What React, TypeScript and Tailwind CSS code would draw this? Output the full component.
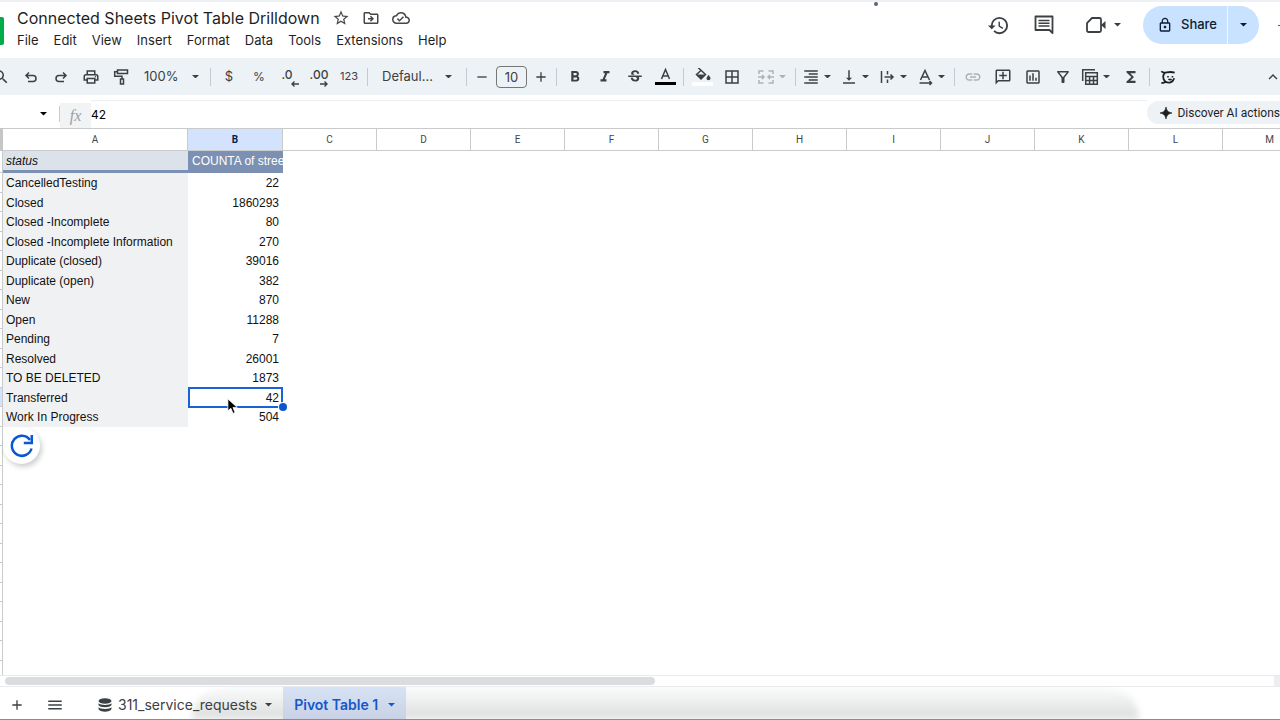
import React from 'react';
import {
    MdAdd,
    MdBorderAll,
    MdFormatAlignRight,
    MdFormatBold,
    MdFormatItalic,
    MdFunctions,
    MdHistory,
    MdInsertLink,
    MdKeyboardArrowUp,
    MdLockOutline,
    MdMenu,
    MdOutlineAddComment,
    MdOutlineCloudDone,
    MdOutlineDriveFileMove,
    MdOutlineFilterAlt,
    MdOutlineInsertChartOutlined,
    MdOutlinePrint,
    MdOutlineStarBorder,
    MdRemove,
    MdSearch,
    MdStrikethroughS,
    MdVerticalAlignBottom,
} from 'react-icons/md';

const menus = ['File', 'Edit', 'View', 'Insert', 'Format', 'Data', 'Tools', 'Extensions', 'Help'];

const columns = ['A', 'B', 'C', 'D', 'E', 'F', 'G', 'H', 'I', 'J', 'K', 'L', 'M'];

const rows = [
    { status: 'CancelledTesting', count: 22 },
    { status: 'Closed', count: 1860293 },
    { status: 'Closed -Incomplete', count: 80 },
    { status: 'Closed -Incomplete Information', count: 270 },
    { status: 'Duplicate (closed)', count: 39016 },
    { status: 'Duplicate (open)', count: 382 },
    { status: 'New', count: 870 },
    { status: 'Open', count: 11288 },
    { status: 'Pending', count: 7 },
    { status: 'Resolved', count: 26001 },
    { status: 'TO BE DELETED', count: 1873 },
    { status: 'Transferred', count: 42 },
    { status: 'Work In Progress', count: 504 },
];

const selectedStatus = 'Transferred';

const emptyRows = Array.from({ length: 13 }, (_, i) => i);

type SvgProps = { children: React.ReactNode; className?: string };

const Svg = ({ children, className = 'size-[18px]' }: SvgProps) => (
    <svg
        viewBox="0 0 18 18"
        className={className}
        fill="none"
        stroke="currentColor"
        strokeWidth="1.5"
        aria-hidden="true"
    >
        {children}
    </svg>
);

const Caret = ({ className = 'w-2' }: { className?: string }) => (
    <svg viewBox="0 0 8 4" className={className} fill="currentColor" aria-hidden="true">
        <path d="M0 0h8L4 4z" />
    </svg>
);

const Separator = () => <div className="mx-[3px] h-[18px] w-px shrink-0 bg-[#c7cbd1]" />;

type ToolProps = { label: string; children: React.ReactNode; disabled?: boolean };

const Tool = ({ label, children, disabled }: ToolProps) => (
    <button
        type="button"
        aria-label={label}
        disabled={disabled}
        className="flex h-7 w-[30px] shrink-0 items-center justify-center rounded text-[#3c4043] disabled:text-[#aeb2b7]"
    >
        {children}
    </button>
);

const SplitTool = ({ label, children, disabled }: ToolProps) => (
    <button
        type="button"
        aria-label={label}
        disabled={disabled}
        className="flex h-7 w-[38px] shrink-0 items-center rounded text-[#3c4043] disabled:text-[#aeb2b7]"
    >
        <span className="flex w-6 justify-center">{children}</span>
        <Caret className="ml-px w-[7px]" />
    </button>
);

const Header = () => (
    <header className="relative flex h-[58px] shrink-0 border-t-2 border-[#edf1f6]">
        <div className="mt-[15px] h-7 w-1 rounded-r-xs bg-[#00ac47]" />
        <div className="ml-[13px] flex flex-col pt-1">
            <div className="flex h-6 items-center text-[#1f1f1f]">
                <h1 className="text-base whitespace-nowrap">Connected Sheets Pivot Table Drilldown</h1>
                <div className="ml-3 flex gap-3 text-[#444746]">
                    <button type="button" aria-label="Star">
                        <MdOutlineStarBorder className="size-[18px]" />
                    </button>
                    <button type="button" aria-label="Move">
                        <MdOutlineDriveFileMove className="size-[18px]" />
                    </button>
                    <button type="button" aria-label="Saved to Drive">
                        <MdOutlineCloudDone className="size-[18px]" />
                    </button>
                </div>
            </div>
            <nav className="flex gap-[15px] text-[13px] leading-5 text-[#1f1f1f]">
                {menus.map((menu) => (
                    <button key={menu} type="button">
                        {menu}
                    </button>
                ))}
            </nav>
        </div>
        <span className="absolute top-0 left-[68%] ml-1 size-1 rounded-full bg-[#5f6368]" />
        <div className="ml-auto flex h-[46px] items-center text-[#3c4043]">
            <button type="button" aria-label="Version history" className="mr-6">
                <MdHistory className="size-[23px]" />
            </button>
            <button type="button" aria-label="Comments" className="mr-8">
                <svg viewBox="0 0 20 20" className="size-5" fill="none" stroke="currentColor" strokeWidth="1.8">
                    <path d="M1.5 1.5h17v16.5l-3-3h-14z" strokeLinejoin="round" />
                    <path d="M4.5 5.5h11M4.5 8.3h11M4.5 11h11" strokeWidth="1.6" />
                </svg>
            </button>
            <button type="button" aria-label="Join a call" className="mr-[22px] flex items-center gap-2">
                <svg viewBox="0 0 20 16" className="h-4 w-5" fill="none" stroke="currentColor" strokeWidth="1.8">
                    <path d="M6 1h7.5A1.5 1.5 0 0 1 15 2.500v11a1.5 1.5 0 0 1-1.5 1.5h-11A1.5 1.5 0 0 1 1 13.500V6z" />
                    <path d="M15 8l4.500-4v8z" fill="currentColor" stroke="none" />
                </svg>
                <Caret className="w-[7px]" />
            </button>
            <div className="flex h-[38px] overflow-hidden rounded-full bg-[#c8e2ff] text-[#0b1d33]">
                <button type="button" className="flex w-[84px] items-center justify-center gap-2 pl-1 text-[13px] font-medium">
                    <MdLockOutline className="size-4" />
                    Share
                </button>
                <button
                    type="button"
                    aria-label="Sharing options"
                    className="flex w-8 items-center justify-center border-l border-white/70"
                >
                    <Caret className="w-[7px]" />
                </button>
            </div>
            <span className="ml-[19px] h-px w-0.5 bg-[#5f6368]" />
        </div>
    </header>
);

const Toolbar = () => (
    <div className="flex h-[37px] shrink-0 items-center overflow-hidden bg-[#edf2f7] text-[13px] text-[#3c4043]">
        <div className="-ml-3.5 flex">
            <Tool label="Search the menus">
                <MdSearch className="size-[18px]" />
            </Tool>
            <Tool label="Undo">
                <Svg>
                    <path d="M7 4.500 4 7.500l3 3M4.500 7.500H11a3 3 0 0 1 0 6H6" />
                </Svg>
            </Tool>
            <Tool label="Redo">
                <Svg>
                    <path d="m11 4.500 3 3-3 3M13.500 7.500H7a3 3 0 0 0 0 6h5" />
                </Svg>
            </Tool>
            <Tool label="Print">
                <MdOutlinePrint className="size-[18px]" />
            </Tool>
            <Tool label="Paint format">
                <Svg>
                    <path d="M5.500 2h10v3.500h-10zM5.500 3.700H2.700v4.500H10V11M8.500 11h3v5h-3z" />
                </Svg>
            </Tool>
        </div>
        <button type="button" className="ml-2 flex w-[63px] items-center justify-between pr-2">
            100%
            <Caret className="w-[7px]" />
        </button>
        <Separator />
        <Tool label="Format as currency">$</Tool>
        <Tool label="Format as percent">
            <span className="text-xs">%</span>
        </Tool>
        <Tool label="Decrease decimal places">
            <span className="relative flex h-5 items-start pr-1 text-xs leading-4 font-medium">
                .0
                <svg
                    viewBox="0 0 8 6"
                    className="absolute -right-0.5 bottom-0 w-2"
                    fill="none"
                    stroke="currentColor"
                    strokeWidth="1.4"
                >
                    <path d="M8 3H1M3.500.5 1 3l2.500 2.500" />
                </svg>
            </span>
        </Tool>
        <Tool label="Increase decimal places">
            <span className="relative flex h-5 items-start text-xs leading-4 font-medium">
                .00
                <svg
                    viewBox="0 0 8 6"
                    className="absolute right-0 bottom-0 w-2"
                    fill="none"
                    stroke="currentColor"
                    strokeWidth="1.4"
                >
                    <path d="M0 3h7M4.500.5 7 3 4.500 5.500" />
                </svg>
            </span>
        </Tool>
        <Tool label="More formats">
            <span className="text-[11px]">123</span>
        </Tool>
        <Separator />
        <button type="button" className="flex w-[92px] items-center justify-between px-[11px]">
            Defaul...
            <Caret className="w-[7px]" />
        </button>
        <Separator />
        <button type="button" aria-label="Decrease font size" className="flex w-6 justify-center">
            <MdRemove className="size-4" />
        </button>
        <input
            aria-label="Font size"
            defaultValue="10"
            className="mx-0.5 h-[22px] w-[31px] rounded border border-[#747775] text-center text-[13px]"
        />
        <button type="button" aria-label="Increase font size" className="flex w-6 justify-center">
            <MdAdd className="size-4" />
        </button>
        <Separator />
        <Tool label="Bold">
            <MdFormatBold className="size-[18px]" />
        </Tool>
        <Tool label="Italic">
            <MdFormatItalic className="size-[18px]" />
        </Tool>
        <Tool label="Strikethrough">
            <MdStrikethroughS className="size-[18px]" />
        </Tool>
        <Tool label="Text color">
            <Svg className="h-[18px] w-[21px]">
                <path d="M5 11 9 1.500 13 11M6.300 8h5.400" />
                <path d="M-1.500 15.500h21" stroke="#000" strokeWidth="3" />
            </Svg>
        </Tool>
        <Separator />
        <Tool label="Fill color">
            <Svg className="h-[18px] w-[21px]">
                <path d="M4.500-.5 12 6.500 7.500 11 3 6.500 8 2" />
                <path
                    d="M3.500 6.500h8l-4 4.500zM15 7s2 2.200 2 3.200a2 2 0 0 1-4 0C13 9.200 15 7 15 7z"
                    fill="currentColor"
                    stroke="none"
                />
                <path d="M-1.500 16h21" stroke="#fff" strokeWidth="3.500" />
            </Svg>
        </Tool>
        <Tool label="Borders">
            <MdBorderAll className="size-[18px]" />
        </Tool>
        <div className="pl-[7px]">
            <SplitTool label="Merge cells" disabled>
                <Svg>
                    <path d="M6.500 3H2v3M2 12v3h4.500M11.500 3H16v3M16 12v3h-4.500M1 9h6M17 9h-6M5 7l2 2-2 2M13 7l-2 2 2 2" />
                </Svg>
            </SplitTool>
        </div>
        <Separator />
        <SplitTool label="Horizontal align">
            <MdFormatAlignRight className="size-[18px]" />
        </SplitTool>
        <SplitTool label="Vertical align">
            <MdVerticalAlignBottom className="size-[18px]" />
        </SplitTool>
        <SplitTool label="Text wrapping">
            <Svg>
                <path d="M3.500 3v12M9.500 3v3.500M9.500 11.500V15M6.500 9H15M12.500 6.500 15 9l-2.500 2.500" />
            </Svg>
        </SplitTool>
        <SplitTool label="Text rotation">
            <Svg>
                <path d="M4.500 12 9 2.500l4.500 9.500M6 9h6M3.500 15h12M13.500 13l2 2-2 2" />
            </Svg>
        </SplitTool>
        <Separator />
        <Tool label="Insert link" disabled>
            <MdInsertLink className="size-[18px]" />
        </Tool>
        <Tool label="Insert comment">
            <MdOutlineAddComment className="size-[18px] -scale-x-100" />
        </Tool>
        <Tool label="Insert chart">
            <MdOutlineInsertChartOutlined className="size-[18px]" />
        </Tool>
        <Tool label="Create a filter">
            <MdOutlineFilterAlt className="size-[18px]" />
        </Tool>
        <SplitTool label="Filter views">
            <Svg>
                <path d="M1.700 13V1.700H14M4.700 4.700h11.600v11.600H4.700zM4.700 8.500h11.600M4.700 12.400h11.600M8.600 8.500v8M12.500 8.500v8" />
            </Svg>
        </SplitTool>
        <Tool label="Functions">
            <MdFunctions className="size-[18px]" />
        </Tool>
        <Separator />
        <Tool label="Add-on">
            <Svg className="size-4">
                <g stroke="#1f1f1f">
                    <path
                        d="M1.500 2.500c1.500 2 3.500 1.800 6 1.300 3-.6 6-.6 9 .2M6 4C3 6 2.500 11 6 14c3.500 2.700 8.500 1.500 10-3.500M1.500 15.500c2 .5 3.500 0 4.500-1.500"
                        strokeWidth="2"
                    />
                    <path d="M9 8v1.500M14 8v1.500M9.500 11.300c1 .8 2.500.8 3.500 0" strokeWidth="1.8" />
                </g>
            </Svg>
        </Tool>
        <button type="button" aria-label="Hide the menus" className="-mr-0.5 ml-auto">
            <MdKeyboardArrowUp className="size-[18px]" />
        </button>
    </div>
);

const FormulaBar = () => (
    <div className="flex h-[33px] shrink-0 items-end overflow-hidden">
        <button type="button" aria-label="Name box" className="flex h-7 w-[59px] items-center justify-end pr-3">
            <Caret className="w-[7px]" />
        </button>
        <div className="mb-1.5 h-4 w-px bg-[#c7cbd1]" />
        <span className="flex h-[25px] w-[31px] items-center justify-center bg-[#f1f3f4] font-['Liberation_Serif',serif] text-base text-[#9aa0a6] italic">
            fx
        </span>
        <input
            aria-label="Formula"
            defaultValue="42"
            className="h-7 min-w-0 flex-1 border-t border-[#eceff1] text-xs outline-none"
        />
        <button
            type="button"
            className="mb-1 flex h-[23px] shrink-0 items-center gap-1 rounded-l-full bg-[#edf2f7] pl-3 font-[Roboto,sans-serif] text-xs whitespace-nowrap text-[#1f1f1f]"
        >
            <svg viewBox="0 0 14 14" className="size-3.5" fill="currentColor" aria-hidden="true">
                <path d="M7 1c1 4 2 5 6 6-4 1-5 2-6 6-1-4-2-5-6-6 4-1 5-2 6-6z" stroke="currentColor" strokeWidth=".6" />
            </svg>
            Discover AI actions
        </button>
    </div>
);

const Sheet = () => (
    <main className="relative min-h-0 flex-1 overflow-hidden font-['Liberation_Sans',Arial,sans-serif]">
        <table className="w-[1317px] table-fixed border-separate border-spacing-0 text-xs leading-4 whitespace-nowrap text-[#111]">
            <colgroup>
                <col className="w-[3px]" />
                <col className="w-[185px]" />
                <col className="w-[95px]" />
                {columns.slice(2).map((column) => (
                    <col key={column} className="w-[94px]" />
                ))}
            </colgroup>
            <thead>
                <tr className="h-[23px] font-[Roboto,sans-serif] text-[10px]">
                    <td className="border-y border-[#c4c7c5] bg-[#c4c7c5] p-0" />
                    {columns.map((column) => (
                        <th
                            key={column}
                            scope="col"
                            className={`border-y border-r border-[#c8cacc] p-0 ${
                                column === 'B'
                                    ? 'bg-[#d3e3fd] font-bold text-[#041e49]'
                                    : 'bg-white font-normal text-[#444746]'
                            }`}
                        >
                            {column}
                        </th>
                    ))}
                </tr>
            </thead>
            <tbody>
                <tr className="h-[22px]">
                    <td className="border-r border-b border-[#c8cacc] p-0" />
                    <td className="border-b-3 border-[#7b90b2] bg-[#dce2ea] px-[3px] py-0 italic">status</td>
                    <td className="overflow-hidden bg-[#7b90b2] px-1 pt-0 pb-[3px] text-white">
                        COUNTA of street_number
                    </td>
                    <td colSpan={11} className="p-0" />
                </tr>
                {rows.map(({ status, count }) => (
                    <tr key={status} className="odd:h-[19px] even:h-5">
                        <td
                            className={`border-r border-b border-[#c8cacc] p-0 ${
                                status === selectedStatus ? 'bg-[#d3e3fd]' : 'bg-white'
                            }`}
                        />
                        <td className="bg-[#f0f1f3] px-[3px] py-0">{status}</td>
                        <td className="relative px-1 py-0 text-right">
                            {count}
                            {status === selectedStatus && (
                                <>
                                    <span className="absolute inset-x-0 -inset-y-px border-2 border-[#1a62d8]" />
                                    <span className="absolute -right-1 -bottom-1 z-10 size-2 rounded-full bg-[#0b57d0] ring-1 ring-white" />
                                    <svg viewBox="0 0 14 20" className="absolute top-2.5 left-[39px] z-10 w-3">
                                        <path
                                            d="M1 1v14l3.500-3 2.500 6 2.500-1-2.500-6H12z"
                                            fill="#000"
                                            stroke="#fff"
                                            strokeWidth="1"
                                        />
                                    </svg>
                                </>
                            )}
                        </td>
                        <td colSpan={11} className="p-0" />
                    </tr>
                ))}
                {emptyRows.map((row) => (
                    <tr key={row} className="odd:h-[19px] even:h-5">
                        <td className="border-r border-b border-[#c8cacc] p-0" />
                        <td colSpan={13} className="p-0" />
                    </tr>
                ))}
            </tbody>
        </table>
        <button
            type="button"
            aria-label="Refresh"
            className="absolute top-[299px] left-[3px] flex size-[37px] items-center justify-center rounded-full bg-white text-[#0b57d0] shadow-[2px_3px_5px_rgba(60,64,67,0.25)]"
        >
            <svg viewBox="0 0 24 24" className="size-6" fill="none" stroke="currentColor" strokeWidth="2.5">
                <path d="M21.500 14.500A10 10 0 1 1 20 6" />
                <path d="M21.800 1v8h-8" />
            </svg>
        </button>
    </main>
);

const SheetTabs = () => (
    <footer className="relative shrink-0 overflow-hidden">
        <div className="flex h-3 items-center border-y border-[#e8eaed] pl-[5px]">
            <div className="h-2 w-[51%] rounded-full bg-[#dadce0]" />
            <div className="ml-auto h-full w-1.5 bg-[#eceeef]" />
        </div>
        <div className="relative flex h-[33px] items-stretch overflow-hidden border-b border-[#8a8c8e] text-[#3c4043]">
            <div className="absolute inset-y-0 right-[11%] left-[15%] rounded-t-[40px] bg-linear-to-b from-[#fbfcfd] to-[#dcdddd] blur-[3px]" />
            <button
                type="button"
                aria-label="Add sheet"
                className="relative ml-2 flex w-[18px] items-center justify-center pt-1"
            >
                <MdAdd className="size-4" />
            </button>
            <button
                type="button"
                aria-label="All sheets"
                className="relative ml-5 flex w-[18px] items-center justify-center pt-1"
            >
                <MdMenu className="size-[18px]" />
            </button>
            <button type="button" className="relative ml-[34px] flex items-center gap-1.5 pt-1 text-sm">
                <svg viewBox="0 0 14 14" className="size-3.5" fill="currentColor" aria-hidden="true">
                    <ellipse cx="7" cy="3" rx="6.5" ry="2.8" />
                    <path d="M.5 5.300c1.500 2.300 11.500 2.300 13 0v1.700c-1.500 3-11.500 3-13 0zM.5 9.300c1.500 2.300 11.500 2.300 13 0V11c-1.500 3.500-11.500 3.500-13 0z" />
                </svg>
                311_service_requests
                <Caret className="ml-0.5 w-[7px]" />
            </button>
            <button
                type="button"
                className="relative ml-[11px] flex items-center gap-2.5 bg-linear-to-b from-[#d7e3f4] to-[#c8d2e4] px-[11px] pt-1 text-sm font-semibold text-[#1557cc]"
            >
                Pivot Table 1
                <Caret className="w-[7px]" />
            </button>
        </div>
    </footer>
);

const App = () => {
    return (
        <div className="flex h-screen flex-col overflow-hidden bg-white font-[Inter,Roboto,sans-serif]">
            <Header />
            <Toolbar />
            <FormulaBar />
            <Sheet />
            <SheetTabs />
        </div>
    );
};

export default App;
